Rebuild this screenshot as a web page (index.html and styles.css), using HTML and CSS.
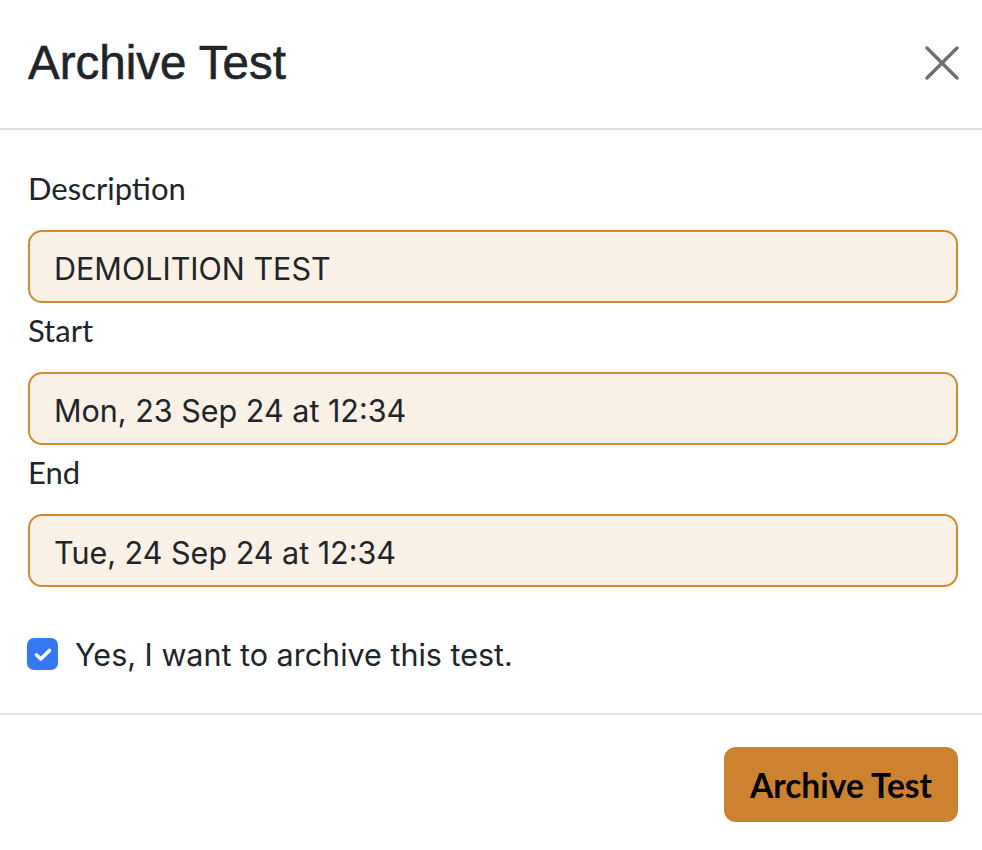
FILE: index.html
```html
<!DOCTYPE html>
<html>
<head>
<meta charset="utf-8">
<link rel="stylesheet" href="styles.css">
</head>
<body>
<div class="modal">
  <div class="modal-header">
    <h1 class="modal-title">Archive Test</h1>
    <button class="close" aria-label="Close">
      <svg width="34" height="34" viewBox="0 0 34 34"><path d="M2 2 L32 32 M32 2 L2 32" stroke="#6f6f6f" stroke-width="3.4" stroke-linecap="round"/></svg>
    </button>
  </div>
  <div class="modal-body">
    <label class="field-label">Description</label>
    <div class="input">DEMOLITION TEST</div>
    <label class="field-label">Start</label>
    <div class="input">Mon, 23 Sep 24 at 12:34</div>
    <label class="field-label">End</label>
    <div class="input">Tue, 24 Sep 24 at 12:34</div>
    <div class="check-row">
      <span class="checkbox">
        <svg width="31" height="32" viewBox="0 0 31 32"><path d="M9.5 17 L13.8 21 L22.5 12.5" fill="none" stroke="#fff" stroke-width="3.6" stroke-linecap="round" stroke-linejoin="round"/></svg>
      </span>
      <span class="check-label">Yes, I want to archive this test.</span>
    </div>
  </div>
  <div class="modal-footer">
    <button class="btn-archive">Archive Test</button>
  </div>
</div>
</body>
</html>
```
FILE: styles.css
```css
html, body {
  margin: 0;
  padding: 0;
  background: #fff;
}
body {
  font-family: Inter, "Liberation Sans", Arial, sans-serif;
  color: #212529;
}
.modal {
  width: 982px;
  height: 850px;
  display: flex;
  flex-direction: column;
}
.modal-header {
  height: 130px;
  box-sizing: border-box;
  border-bottom: 2px solid #dee2e6;
  display: flex;
  align-items: center;
  justify-content: space-between;
  padding: 0 24px 2px 28px;
}
.modal-title {
  margin: 0;
  font-family: "Liberation Sans", Arial, sans-serif;
  font-weight: 400;
  font-size: 47.5px;
  line-height: 1;
  color: #212529;
  -webkit-text-stroke: 0.6px #212529;
}
.close {
  border: 0;
  background: none;
  padding: 0;
  width: 34px;
  height: 34px;
  margin-right: -1px;
  display: flex;
  cursor: pointer;
}
.modal-body {
  padding: 31px 24px 32px 28px;
  display: flex;
  flex-direction: column;
}
.field-label {
  display: block;
  font-family: Lato, "Noto Sans", sans-serif;
  font-size: 31px;
  line-height: 54px;
  margin-bottom: 15px;
  color: #212529;
}
.input {
  height: 73px;
  box-sizing: border-box;
  border: 2px solid #d08a35;
  border-radius: 14px;
  background: #faf1e6;
  padding: 3px 24px 0;
  display: flex;
  align-items: center;
  font-family: Inter, "Liberation Sans", sans-serif;
  font-size: 30.5px;
  color: #212529;
}
.check-row {
  margin-top: 40px;
  height: 54px;
  display: flex;
  align-items: center;
  gap: 17px;
}
.checkbox {
  width: 31px;
  height: 32px;
  margin-left: -1px;
  border-radius: 7px;
  background: #3478f6;
  display: flex;
}
.check-label {
  font-family: Inter, "Liberation Sans", sans-serif;
  font-size: 30.5px;
  color: #212529;
}
.modal-footer {
  border-top: 2px solid #dee2e6;
  flex: 1;
  display: flex;
  justify-content: flex-end;
  align-items: flex-start;
  padding: 32px 24px 0 0;
}
.btn-archive {
  width: 234px;
  height: 75px;
  border: 0;
  border-radius: 12px;
  background: #cd8230;
  color: #000;
  font-family: Lato, "Noto Sans", sans-serif;
  font-weight: 700;
  font-size: 33.5px;
  padding: 0;
}
```
